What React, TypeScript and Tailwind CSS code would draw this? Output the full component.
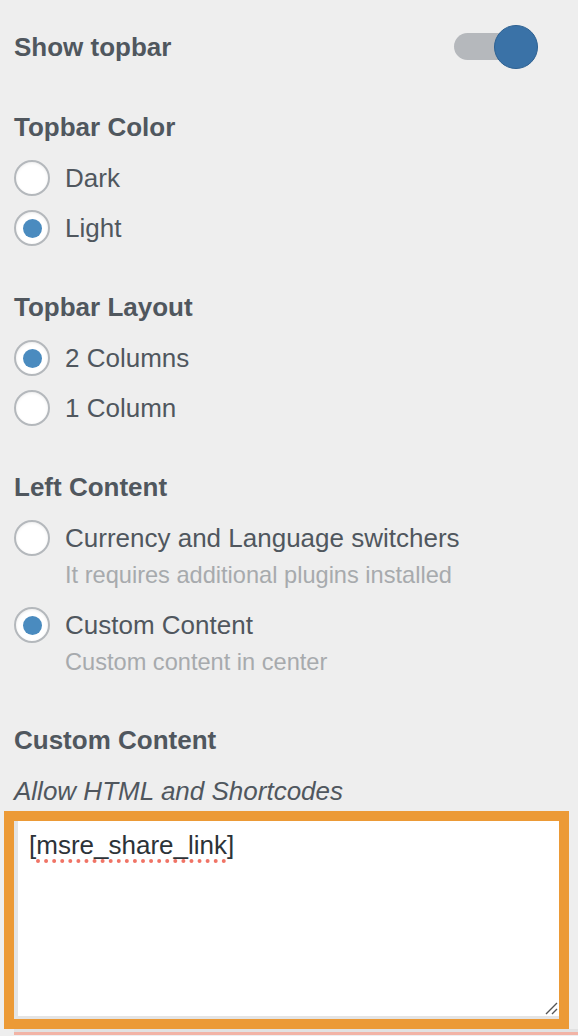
import { useState } from 'react'

type Option = { value: string; label: string; description?: string }

const font = { fontFamily: '"Liberation Sans", Arial, sans-serif' }

function Toggle({ checked, onChange }: { checked: boolean; onChange: () => void }) {
  return (
    <button
      type="button"
      onClick={onChange}
      className="relative w-[84px] h-[44px] shrink-0"
      aria-pressed={checked}
    >
      <span className="absolute left-0 top-[8px] w-[66px] h-[27px] rounded-full bg-[#b5b8bc]" />
      <span className="absolute right-0 top-0 w-[44px] h-[44px] rounded-full bg-[#3a72a7] border border-[#2d6192]" />
    </button>
  )
}

function Radio({ checked }: { checked: boolean }) {
  return (
    <span className="w-[36px] h-[36px] rounded-full border-2 border-[#b4b8bc] bg-white shadow-[inset_0_1px_3px_rgba(0,0,0,0.08)] flex items-center justify-center shrink-0">
      {checked && <span className="w-[19px] h-[19px] rounded-full bg-[#4a8bbf]" />}
    </span>
  )
}

function RadioGroup({
  title,
  options,
  value,
  onChange,
}: {
  title: string
  options: Option[]
  value: string
  onChange: (v: string) => void
}) {
  return (
    <div className="mt-[30px]">
      <h3 className="h-[51px] flex items-center text-[26px] font-bold text-[#50575e]">{title}</h3>
      {options.map((opt, i) => (
        <div key={opt.value} className={opt.description && i > 0 ? 'mt-[13px]' : ''}>
          <label
            className="h-[50px] flex items-center gap-[15px] cursor-pointer"
            onClick={() => onChange(opt.value)}
          >
            <Radio checked={value === opt.value} />
            <span className="text-[26px] text-[#50575e]">{opt.label}</span>
          </label>
          {opt.description && (
            <p className="pl-[51px] h-[24px] leading-[24px] text-[23.6px] text-[#a7aaad]">
              {opt.description}
            </p>
          )}
        </div>
      ))}
    </div>
  )
}

export default function App() {
  const [showTopbar, setShowTopbar] = useState(true)
  const [color, setColor] = useState('light')
  const [layout, setLayout] = useState('2')
  const [left, setLeft] = useState('custom')

  return (
    <div className="min-h-[1036px] bg-[#eeeeee] pl-[14px] pt-[22px]" style={font}>
      {/* Mostrar topbar */}
      <div className="h-[50px] flex items-center justify-between pr-[40px]">
        <h3 className="text-[26px] font-bold text-[#50575e]">Show topbar</h3>
        <Toggle checked={showTopbar} onChange={() => setShowTopbar(!showTopbar)} />
      </div>

      <RadioGroup
        title="Topbar Color"
        value={color}
        onChange={setColor}
        options={[
          { value: 'dark', label: 'Dark' },
          { value: 'light', label: 'Light' },
        ]}
      />

      <div className="-mt-[1px]">
        <RadioGroup
          title="Topbar Layout"
          value={layout}
          onChange={setLayout}
          options={[
            { value: '2', label: '2 Columns' },
            { value: '1', label: '1 Column' },
          ]}
        />
      </div>

      <div className="-mt-[1px]">
        <RadioGroup
          title="Left Content"
          value={left}
          onChange={setLeft}
          options={[
            {
              value: 'switchers',
              label: 'Currency and Language switchers',
              description: 'It requires additional plugins installed',
            },
            { value: 'custom', label: 'Custom Content', description: 'Custom content in center' },
          ]}
        />
      </div>

      {/* Contenido personalizado */}
      <h3 className="mt-[41px] h-[50px] flex items-center text-[26px] font-bold text-[#50575e]">
        Custom Content
      </h3>
      <p className="mt-[8px] h-[36px] flex items-center text-[26px] italic text-[#50575e]">
        Allow HTML and Shortcodes
      </p>
      <div className="mt-[2px] -ml-[10px] w-[565px] h-[218px] border-[10px] border-[#ec9a36]">
        <div className="relative h-full bg-white border-l-4 border-b-[3px] border-[#e4e4e4] pl-[11px] pt-[9px] text-[26px] leading-[30px] text-[#2c3338]">
          [
          <span className="underline decoration-dotted decoration-[#f07466] decoration-[4px] underline-offset-[5px]">
            msre_share_link
          </span>
          ]
          <svg
            className="absolute right-[1px] bottom-[1px]"
            width="14"
            height="14"
            viewBox="0 0 14 14"
          >
            <path d="M2 13 L13 2 M8 13 L13 8" stroke="#555" strokeWidth="1.4" />
          </svg>
        </div>
      </div>
      <div className="h-[3px] bg-[#e2e2e2]" />
      <div className="h-[3px] bg-[#f2b4a6]" />
    </div>
  )
}
